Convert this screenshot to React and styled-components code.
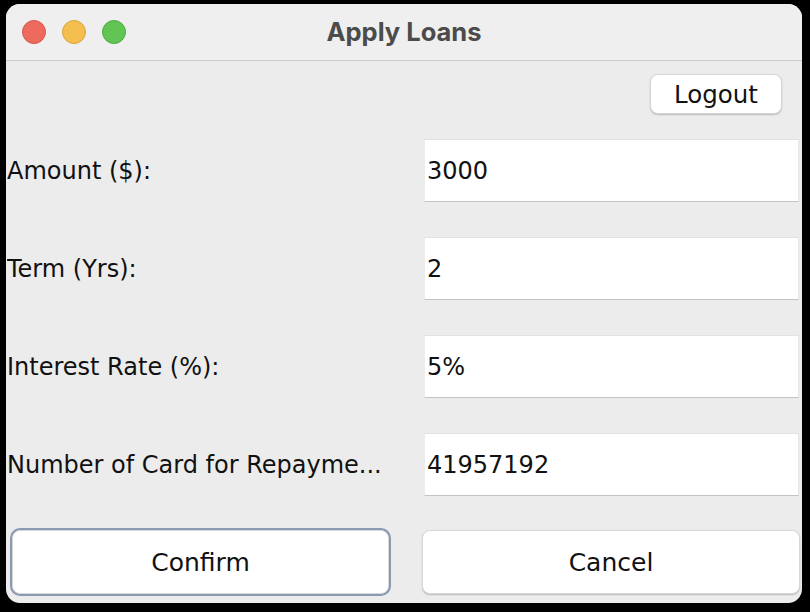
import React from "react";
import styled, { createGlobalStyle } from "styled-components";

const Global = createGlobalStyle`
  html, body { margin: 0; padding: 0; background: #000; }
  body { width: 810px; height: 612px; overflow: hidden; }
  #root { width: 810px; height: 612px; }
`;

const Page = styled.div`
  width: 810px;
  height: 612px;
  background: #000;
  padding: 4px 8px 9px 6px;
  box-sizing: border-box;
  display: flex;
`;

const Window = styled.div`
  flex: 1;
  background: #ececec;
  border-radius: 14px;
  overflow: hidden;
  display: flex;
  flex-direction: column;
  font-family: "DejaVu Sans", "Liberation Sans", sans-serif;
  color: #111;
`;

const TitleBar = styled.div`
  height: 56px;
  flex: none;
  background: #efefef;
  border-bottom: 1px solid #cdcdcd;
  display: grid;
  grid-template-columns: 1fr auto 1fr;
  align-items: center;
`;

const Lights = styled.div`
  display: flex;
  gap: 16px;
  padding-left: 16px;
`;

const Light = styled.span`
  width: 24px;
  height: 24px;
  border-radius: 50%;
  box-sizing: border-box;
  background: ${(p) => p.$c};
  border: 1px solid ${(p) => p.$b};
`;

const Title = styled.div`
  font-family: Inter, "Liberation Sans", sans-serif;
  font-weight: 700;
  font-size: 25.5px;
  color: #4b4b4b;
  padding-bottom: 2px;
`;

const Body = styled.div`
  flex: 1;
  display: flex;
  flex-direction: column;
  padding: 13px 3px 0 1px;
`;

const TopRow = styled.div`
  display: flex;
  justify-content: flex-end;
  padding-right: 17px;
`;

const SmallButton = styled.button`
  width: 132px;
  height: 40px;
  background: #fff;
  border: 1px solid #d6d6d6;
  border-radius: 8px;
  box-shadow: 0 1px 1.5px rgba(0, 0, 0, 0.22);
  font-family: "DejaVu Sans", sans-serif;
  font-size: 24.5px;
  color: #111;
  padding: 0;
`;

const Form = styled.div`
  display: grid;
  grid-template-columns: 417px 375px;
  row-gap: 35px;
  margin-top: 25px;
`;

const Label = styled.div`
  font-size: 24px;
  align-self: center;
  white-space: nowrap;
  overflow: hidden;
  padding-top: 1px;
`;

const Field = styled.div`
  height: 63px;
  box-sizing: border-box;
  background: #fff;
  border-top: 1px solid #e2e2e2;
  border-bottom: 1px solid #c4c4c4;
  border-left: 1px solid #ececec;
  border-right: 1px solid #e6e6e6;
  display: flex;
  align-items: center;
  padding-left: 2px;
  padding-top: 1px;
  font-size: 24px;
`;

const Buttons = styled.div`
  display: grid;
  grid-template-columns: 377px 378px;
  column-gap: 33px;
  padding-left: 5px;
  margin-top: 34px;
`;

const BigButton = styled.button`
  height: 64px;
  background: #fff;
  border: 1px solid #d8d8d8;
  border-radius: 8px;
  box-shadow: ${(p) =>
    p.$focus
      ? "0 0 0 2px #8a9ab0, 0 1px 1px rgba(0,0,0,0.15)"
      : "0 1px 1.5px rgba(0,0,0,0.22)"};
  font-family: "DejaVu Sans", sans-serif;
  font-size: 25px;
  color: #111;
  padding: 0;
`;

const rows = [
  ["Amount ($):", "3000"],
  ["Term (Yrs):", "2"],
  ["Interest Rate (%):", "5%"],
  ["Number of Card for Repayme...", "41957192"],
];

export default function App() {
  return (
    <>
      <Global />
      <Page>
        <Window>
          <TitleBar>
            <Lights>
              <Light $c="#ee6a5f" $b="#d4574d" />
              <Light $c="#f5bf4f" $b="#d9a53c" />
              <Light $c="#61c554" $b="#4eac43" />
            </Lights>
            <Title>Apply Loans</Title>
            <div />
          </TitleBar>
          <Body>
            <TopRow>
              <SmallButton>Logout</SmallButton>
            </TopRow>
            <Form>
              {rows.map(([l, v]) => (
                <React.Fragment key={l}>
                  <Label>{l}</Label>
                  <Field>{v}</Field>
                </React.Fragment>
              ))}
            </Form>
            <Buttons>
              <BigButton $focus>Confirm</BigButton>
              <BigButton>Cancel</BigButton>
            </Buttons>
          </Body>
        </Window>
      </Page>
    </>
  );
}
